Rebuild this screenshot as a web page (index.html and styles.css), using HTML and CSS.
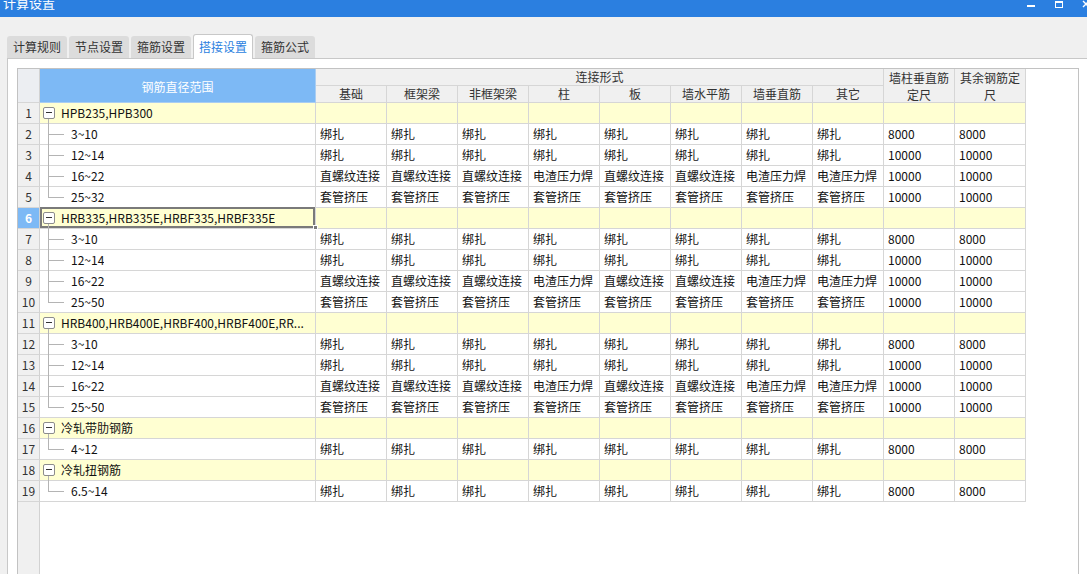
FILE: index.html
```html
<!DOCTYPE html>
<html lang="zh-CN">
<head>
<meta charset="utf-8">
<title>计算设置</title>
<link rel="stylesheet" href="styles.css">
</head>
<body>
<div class="titlebar">
  <span class="title">计算设置</span>
  <svg class="winctl" width="70" height="17" viewBox="0 0 70 17">
    <rect x="10" y="5" width="8" height="2" fill="#fff"/>
    <rect x="38.5" y="1.5" width="7" height="6" fill="none" stroke="#fff" stroke-width="1"/>
    <rect x="38" y="1" width="8" height="2" fill="#fff"/>
    <path d="M66 1 L72 7 M66 7 L72 1" stroke="#fff" stroke-width="1.4"/>
  </svg>
</div>
<div class="tabs">
  <div class="tab">计算规则</div>
  <div class="tab">节点设置</div>
  <div class="tab">箍筋设置</div>
  <div class="tab active">搭接设置</div>
  <div class="tab">箍筋公式</div>
</div>
<div class="panel">
  <div class="sheet">
    <div class="grid">
      <div class="c h corner"></div>
      <div class="c h namehead">钢筋直径范围</div>
      <div class="c h grp">连接形式</div>
      <div class="c h tall t1">墙柱垂直筋定尺</div>
      <div class="c h tall t2">其余钢筋定尺</div>
      <div class="c h sub">基础</div>
      <div class="c h sub">框架梁</div>
      <div class="c h sub">非框架梁</div>
      <div class="c h sub">柱</div>
      <div class="c h sub">板</div>
      <div class="c h sub">墙水平筋</div>
      <div class="c h sub">墙垂直筋</div>
      <div class="c h sub">其它</div>

      <div class="row group">
        <div class="c n">1</div><div class="c nm gn"><span class="tog"></span><span class="t">HPB235,HPB300</span></div>
        <div class="c"></div><div class="c"></div><div class="c"></div><div class="c"></div><div class="c"></div><div class="c"></div><div class="c"></div><div class="c"></div><div class="c"></div><div class="c"></div>
      </div>
      <div class="row">
        <div class="c n">2</div><div class="c nm ch"><span class="t">3~10</span></div>
        <div class="c">绑扎</div><div class="c">绑扎</div><div class="c">绑扎</div><div class="c">绑扎</div><div class="c">绑扎</div><div class="c">绑扎</div><div class="c">绑扎</div><div class="c">绑扎</div><div class="c">8000</div><div class="c">8000</div>
      </div>
      <div class="row">
        <div class="c n">3</div><div class="c nm ch"><span class="t">12~14</span></div>
        <div class="c">绑扎</div><div class="c">绑扎</div><div class="c">绑扎</div><div class="c">绑扎</div><div class="c">绑扎</div><div class="c">绑扎</div><div class="c">绑扎</div><div class="c">绑扎</div><div class="c">10000</div><div class="c">10000</div>
      </div>
      <div class="row">
        <div class="c n">4</div><div class="c nm ch"><span class="t">16~22</span></div>
        <div class="c">直螺纹连接</div><div class="c">直螺纹连接</div><div class="c">直螺纹连接</div><div class="c">电渣压力焊</div><div class="c">直螺纹连接</div><div class="c">直螺纹连接</div><div class="c">电渣压力焊</div><div class="c">电渣压力焊</div><div class="c">10000</div><div class="c">10000</div>
      </div>
      <div class="row">
        <div class="c n">5</div><div class="c nm ch last"><span class="t">25~32</span></div>
        <div class="c">套管挤压</div><div class="c">套管挤压</div><div class="c">套管挤压</div><div class="c">套管挤压</div><div class="c">套管挤压</div><div class="c">套管挤压</div><div class="c">套管挤压</div><div class="c">套管挤压</div><div class="c">10000</div><div class="c">10000</div>
      </div>

      <div class="row group">
        <div class="c n cur">6</div><div class="c nm gn sel"><span class="tog"></span><span class="t">HRB335,HRB335E,HRBF335,HRBF335E</span><span class="handle"></span></div>
        <div class="c"></div><div class="c"></div><div class="c"></div><div class="c"></div><div class="c"></div><div class="c"></div><div class="c"></div><div class="c"></div><div class="c"></div><div class="c"></div>
      </div>
      <div class="row">
        <div class="c n">7</div><div class="c nm ch"><span class="t">3~10</span></div>
        <div class="c">绑扎</div><div class="c">绑扎</div><div class="c">绑扎</div><div class="c">绑扎</div><div class="c">绑扎</div><div class="c">绑扎</div><div class="c">绑扎</div><div class="c">绑扎</div><div class="c">8000</div><div class="c">8000</div>
      </div>
      <div class="row">
        <div class="c n">8</div><div class="c nm ch"><span class="t">12~14</span></div>
        <div class="c">绑扎</div><div class="c">绑扎</div><div class="c">绑扎</div><div class="c">绑扎</div><div class="c">绑扎</div><div class="c">绑扎</div><div class="c">绑扎</div><div class="c">绑扎</div><div class="c">10000</div><div class="c">10000</div>
      </div>
      <div class="row">
        <div class="c n">9</div><div class="c nm ch"><span class="t">16~22</span></div>
        <div class="c">直螺纹连接</div><div class="c">直螺纹连接</div><div class="c">直螺纹连接</div><div class="c">电渣压力焊</div><div class="c">直螺纹连接</div><div class="c">直螺纹连接</div><div class="c">电渣压力焊</div><div class="c">电渣压力焊</div><div class="c">10000</div><div class="c">10000</div>
      </div>
      <div class="row">
        <div class="c n">10</div><div class="c nm ch last"><span class="t">25~50</span></div>
        <div class="c">套管挤压</div><div class="c">套管挤压</div><div class="c">套管挤压</div><div class="c">套管挤压</div><div class="c">套管挤压</div><div class="c">套管挤压</div><div class="c">套管挤压</div><div class="c">套管挤压</div><div class="c">10000</div><div class="c">10000</div>
      </div>

      <div class="row group">
        <div class="c n">11</div><div class="c nm gn"><span class="tog"></span><span class="t">HRB400,HRB400E,HRBF400,HRBF400E,RR...</span></div>
        <div class="c"></div><div class="c"></div><div class="c"></div><div class="c"></div><div class="c"></div><div class="c"></div><div class="c"></div><div class="c"></div><div class="c"></div><div class="c"></div>
      </div>
      <div class="row">
        <div class="c n">12</div><div class="c nm ch"><span class="t">3~10</span></div>
        <div class="c">绑扎</div><div class="c">绑扎</div><div class="c">绑扎</div><div class="c">绑扎</div><div class="c">绑扎</div><div class="c">绑扎</div><div class="c">绑扎</div><div class="c">绑扎</div><div class="c">8000</div><div class="c">8000</div>
      </div>
      <div class="row">
        <div class="c n">13</div><div class="c nm ch"><span class="t">12~14</span></div>
        <div class="c">绑扎</div><div class="c">绑扎</div><div class="c">绑扎</div><div class="c">绑扎</div><div class="c">绑扎</div><div class="c">绑扎</div><div class="c">绑扎</div><div class="c">绑扎</div><div class="c">10000</div><div class="c">10000</div>
      </div>
      <div class="row">
        <div class="c n">14</div><div class="c nm ch"><span class="t">16~22</span></div>
        <div class="c">直螺纹连接</div><div class="c">直螺纹连接</div><div class="c">直螺纹连接</div><div class="c">电渣压力焊</div><div class="c">直螺纹连接</div><div class="c">直螺纹连接</div><div class="c">电渣压力焊</div><div class="c">电渣压力焊</div><div class="c">10000</div><div class="c">10000</div>
      </div>
      <div class="row">
        <div class="c n">15</div><div class="c nm ch last"><span class="t">25~50</span></div>
        <div class="c">套管挤压</div><div class="c">套管挤压</div><div class="c">套管挤压</div><div class="c">套管挤压</div><div class="c">套管挤压</div><div class="c">套管挤压</div><div class="c">套管挤压</div><div class="c">套管挤压</div><div class="c">10000</div><div class="c">10000</div>
      </div>

      <div class="row group">
        <div class="c n">16</div><div class="c nm gn"><span class="tog"></span><span class="t">冷轧带肋钢筋</span></div>
        <div class="c"></div><div class="c"></div><div class="c"></div><div class="c"></div><div class="c"></div><div class="c"></div><div class="c"></div><div class="c"></div><div class="c"></div><div class="c"></div>
      </div>
      <div class="row">
        <div class="c n">17</div><div class="c nm ch last"><span class="t">4~12</span></div>
        <div class="c">绑扎</div><div class="c">绑扎</div><div class="c">绑扎</div><div class="c">绑扎</div><div class="c">绑扎</div><div class="c">绑扎</div><div class="c">绑扎</div><div class="c">绑扎</div><div class="c">8000</div><div class="c">8000</div>
      </div>

      <div class="row group">
        <div class="c n">18</div><div class="c nm gn"><span class="tog"></span><span class="t">冷轧扭钢筋</span></div>
        <div class="c"></div><div class="c"></div><div class="c"></div><div class="c"></div><div class="c"></div><div class="c"></div><div class="c"></div><div class="c"></div><div class="c"></div><div class="c"></div>
      </div>
      <div class="row">
        <div class="c n">19</div><div class="c nm ch last"><span class="t">6.5~14</span></div>
        <div class="c">绑扎</div><div class="c">绑扎</div><div class="c">绑扎</div><div class="c">绑扎</div><div class="c">绑扎</div><div class="c">绑扎</div><div class="c">绑扎</div><div class="c">绑扎</div><div class="c">8000</div><div class="c">8000</div>
      </div>
    </div>
  </div>
</div>
</body>
</html>
```

FILE: styles.css
```css
* { box-sizing: border-box; }

body {
  margin: 0;
  width: 1087px;
  height: 574px;
  overflow: hidden;
  background: #f0f0f0;
  font-family: "Noto Sans CJK SC", "Microsoft YaHei", "Noto Sans", sans-serif;
  font-size: 12px;
  color: #111;
}

.titlebar {
  height: 17px;
  background: #2b7fe0;
  color: #fff;
  display: flex;
  justify-content: space-between;
  align-items: flex-start;
  overflow: hidden;
}

.title {
  font-size: 13px;
  line-height: 13px;
  margin: -4px 0 0 3px;
}

.winctl { display: block; }

.tabs {
  height: 41px;
  display: flex;
  align-items: flex-end;
  padding-left: 7px;
}

.tab {
  height: 22px;
  line-height: 22px;
  padding: 0 6px;
  margin-right: 2px;
  background: #dcdcdc;
  color: #333;
  border-radius: 3px 3px 0 0;
}

.tab.active {
  height: 25px;
  line-height: 23px;
  padding: 0 5px;
  background: #fff;
  color: #2b7fe0;
  border: 1px solid #c8c8c8;
  border-bottom: none;
  margin-bottom: -1px;
  position: relative;
  z-index: 1;
}

.panel {
  margin-left: 7px;
  border-top: 1px solid #c8c8c8;
  border-left: 1px solid #c8c8c8;
  background: #fff;
  padding: 9px 0 0 9px;
  height: 560px;
}

.sheet {
  width: 1062px;
  height: 540px;
  border: 1px solid #c2c2c2;
  background: linear-gradient(to right, #f0f0f0 0 21px, #d2d2d2 21px 22px, #fff 22px);
}

.grid {
  display: grid;
  grid-template-columns: 22px 276px repeat(10, 71px);
  grid-template-rows: 17px 17px;
  grid-auto-rows: 21px;
  width: 1008px;
}

.row { display: contents; }

.c {
  border-right: 1px solid #d6d6d6;
  border-bottom: 1px solid #d6d6d6;
  padding: 0 4px;
  line-height: 20px;
  white-space: nowrap;
  overflow: hidden;
  background: #fff;
}

.h {
  background: #f0f0f0;
  color: #333;
  text-align: center;
  line-height: 16px;
  padding: 0;
}

.corner {
  grid-column: 1;
  grid-row: 1 / 3;
  background: #eceef2;
  border-right-color: #d2d2d2;
}

.namehead {
  grid-column: 2;
  grid-row: 1 / 3;
  background: #7db9f5;
  color: #fff;
  display: flex;
  align-items: center;
  justify-content: center;
  padding-top: 2px;
  border-color: #a9cdf2;
}

.grp { grid-column: 3 / 11; grid-row: 1; }

.sub { grid-row: 2; }

.tall {
  grid-row: 1 / 3;
  white-space: normal;
  line-height: 17px;
}

.t1 { grid-column: 11; }
.t2 { grid-column: 12; }

.n {
  background: #f0f0f0;
  color: #333;
  text-align: center;
  padding: 0;
  border-right-color: #d2d2d2;
}

.n.cur {
  background: #7db9f5;
  color: #fff;
  font-weight: bold;
}

.group > .c { background: #ffffd2; }
.group > .n { background: #f0f0f0; }
.group > .n.cur { background: #7db9f5; }

.nm {
  position: relative;
  overflow: visible;
}

.nm .t {
  display: inline-block;
  vertical-align: top;
  overflow: hidden;
  text-overflow: ellipsis;
  max-width: 250px;
}

.gn {
  padding: 0 0 0 3px;
  display: flex;
  align-items: center;
}

.tog {
  position: relative;
  width: 12px;
  height: 12px;
  border: 1px solid #8c8c8c;
  border-radius: 2px;
  background: #fff;
  margin-right: 6px;
  flex: none;
}

.tog::before {
  content: "";
  position: absolute;
  left: 2px;
  right: 2px;
  top: 4px;
  height: 1px;
  background: #333;
}

.gn::after {
  content: "";
  position: absolute;
  left: 8px;
  top: 16px;
  bottom: -1px;
  width: 1px;
  background: #b4b4b4;
}

.ch { padding-left: 31px; }

.ch::before {
  content: "";
  position: absolute;
  left: 8px;
  top: 0;
  bottom: -1px;
  width: 1px;
  background: #b4b4b4;
}

.ch.last::before { bottom: auto; height: 11px; }

.ch::after {
  content: "";
  position: absolute;
  left: 8px;
  top: 10px;
  width: 16px;
  height: 1px;
  background: #b4b4b4;
}

.sel::before {
  content: "";
  position: absolute;
  left: 0;
  top: -1px;
  right: 0;
  bottom: 0;
  border: 2px solid #7a7a7a;
  pointer-events: none;
}

.handle {
  position: absolute;
  right: -3px;
  bottom: -2px;
  width: 5px;
  height: 5px;
  background: #7a7a7a;
  border: 1px solid #fff;
  z-index: 2;
}
```
